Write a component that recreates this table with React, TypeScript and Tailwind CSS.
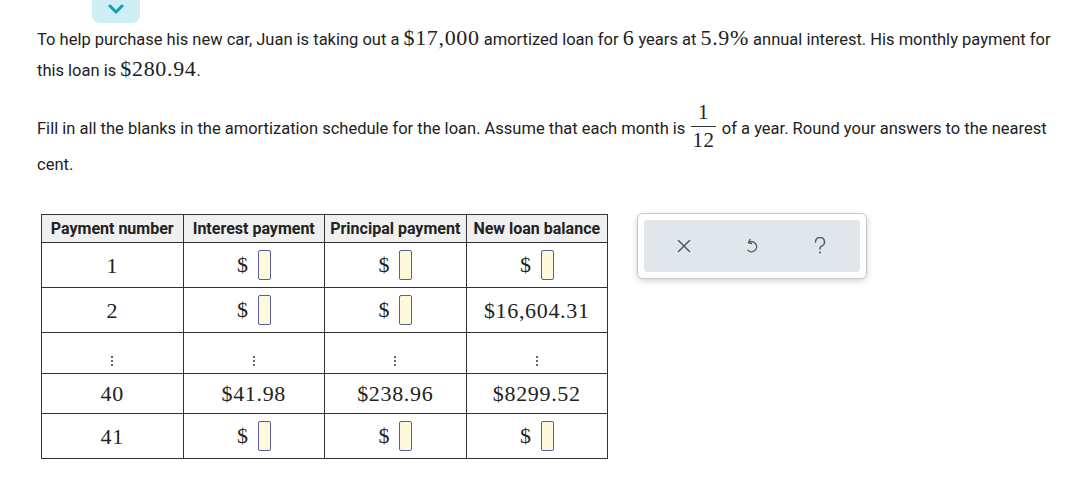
import React from "react";

const serif = "font-['Liberation_Serif',serif] tracking-[0.03em]";

function Blank() {
  return (
    <span className="inline-flex items-center gap-[9px] align-middle">
      <span className={`${serif} text-[22px] leading-none text-[#222]`}>$</span>
      <span className="inline-block h-[30px] w-[13px] rounded-[2px] border-[1.5px] border-[#5c5c9c] bg-[#fff9dc]" />
    </span>
  );
}

function Dots() {
  return (
    <span className="inline-flex flex-col items-center gap-[2px]">
      <span className="h-[2px] w-[2px] rounded-full bg-[#333]" />
      <span className="h-[2px] w-[2px] rounded-full bg-[#333]" />
      <span className="h-[2px] w-[2px] rounded-full bg-[#333]" />
    </span>
  );
}

type Cell = "blank" | "dots" | string;

const rows: { h: string; cells: Cell[] }[] = [
  { h: "h-[45px]", cells: ["1", "blank", "blank", "blank"] },
  { h: "h-[45px]", cells: ["2", "blank", "blank", "$16,604.31"] },
  { h: "h-[41px]", cells: ["dots", "dots", "dots", "dots"] },
  { h: "h-[40px]", cells: ["40", "$41.98", "$238.96", "$8299.52"] },
  { h: "h-[45px]", cells: ["41", "blank", "blank", "blank"] },
];

const headers = ["Payment number", "Interest payment", "Principal payment", "New loan balance"];

function M({ children }: { children: React.ReactNode }) {
  return <span className={`${serif} text-[22px] text-[#222]`}>{children}</span>;
}

export default function App() {
  return (
    <div className="min-h-[495px] w-[1072px] bg-white font-['Roboto',sans-serif] text-[16.5px] text-[#222]">
      <div className="ml-[92px] flex h-[23px] w-[48px] items-center justify-center rounded-b-[8px] bg-[#cdeef4]">
        <svg width="16" height="10" viewBox="0 0 16 10" className="-mt-[6px]">
          <path d="M2 2 L8 8 L14 2" fill="none" stroke="#1a9ab4" strokeWidth="3" strokeLinecap="round" strokeLinejoin="round" />
        </svg>
      </div>

      <div className="w-[1064px] pl-[37px]">
        <p className="leading-[29px]">
          To help purchase his new car, Juan is taking out a <M>$17,000</M> amortized loan for <M>6</M> years at{" "}
          <M>5.9%</M> annual interest. His monthly payment for this loan is <M>$280.94</M>.
        </p>

        <p className="mt-[26px] leading-[36px]">
          Fill in all the blanks in the amortization schedule for the loan. Assume that each month is{" "}
          <span className={`${serif} mx-[2px] -my-[10px] inline-flex -translate-y-[3px] flex-col items-center align-middle text-[21px] leading-[21px] text-[#222]`}>
            <span className="px-[1px]">1</span>
            <span className="my-[3px] h-[1px] w-full bg-[#333]" />
            <span className="px-[1px]">12</span>
          </span>{" "}
          of a year. Round your answers to the nearest cent.
        </p>

        <div className="mt-[31px] flex items-start">
          <table className="ml-[4px] w-[567px] table-fixed border-collapse border-[1.5px] border-[#333]">
            <thead>
              <tr className="h-[28px] bg-[#f0f0f0]">
                {headers.map((h) => (
                  <th key={h} className="border-[1.5px] border-[#333] p-0 text-center text-[16px] font-bold text-[#222]">
                    {h}
                  </th>
                ))}
              </tr>
            </thead>
            <tbody>
              {rows.map((r, i) => (
                <tr key={i} className={r.h}>
                  {r.cells.map((c, j) => (
                    <td key={j} className="border-[1.5px] border-[#333] p-0 text-center align-middle">
                      {c === "blank" ? (
                        <Blank />
                      ) : c === "dots" ? (
                        <Dots />
                      ) : (
                        <span className={`${serif} text-[22px] text-[#222]`}>{c}</span>
                      )}
                    </td>
                  ))}
                </tr>
              ))}
            </tbody>
          </table>

          <div className="ml-[29px] -mt-[1px] rounded-[6px] border border-[#c8c8c8] bg-white p-[6px] shadow-[0_2px_6px_rgba(0,0,0,0.18)]">
            <div className="flex h-[52px] w-[216px] items-center justify-around rounded-[4px] bg-[#e0e6e9] px-[6px]">
              <svg width="16" height="16" viewBox="0 0 16 16">
                <path d="M2.5 2.5 L13.5 13.5 M13.5 2.5 L2.5 13.5" stroke="#4d5b66" strokeWidth="1.5" strokeLinecap="round" />
              </svg>
              <svg width="16" height="16" viewBox="0 0 16 16">
                <path d="M6 1.5 L4.5 4.5 L7.5 5.5" fill="none" stroke="#4d5b66" strokeWidth="1.4" strokeLinecap="round" strokeLinejoin="round" />
                <path d="M4.8 4.6 A5 5 0 1 1 4 12.2" fill="none" stroke="#4d5b66" strokeWidth="1.4" strokeLinecap="round" />
              </svg>
              <svg width="16" height="18" viewBox="0 0 16 18">
                <path d="M3.5 5 A4.5 4.5 0 1 1 9 9.3 C8 9.8 8 10.5 8 12" fill="none" stroke="#4d5b66" strokeWidth="1.5" strokeLinecap="round" />
                <circle cx="8" cy="15.5" r="1" fill="#4d5b66" />
              </svg>
            </div>
          </div>
        </div>
      </div>
    </div>
  );
}
